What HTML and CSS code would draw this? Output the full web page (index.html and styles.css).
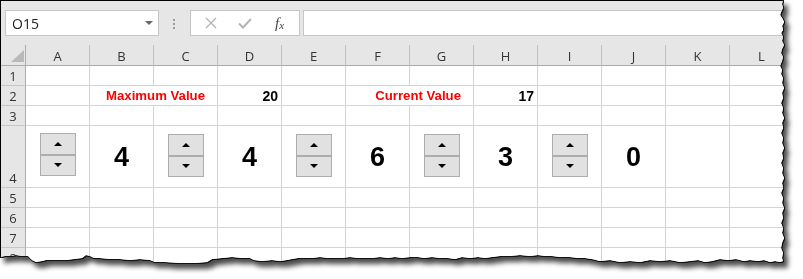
FILE: index.html
```html
<!DOCTYPE html>
<html>
<head>
<meta charset="utf-8">
<link rel="stylesheet" href="styles.css">
</head>
<body>
<div class="stage">
  <div class="sheet">
    <div class="fbar">
      <div class="namebox"><span>O15</span><span class="caret"></span></div>
      <div class="dots"><i></i><i></i><i></i></div>
      <div class="fxbox">
        <svg class="ico" width="14" height="14" viewBox="0 0 14 14"><path d="M2 2L12 12M12 2L2 12" stroke="#b4b4b4" stroke-width="1.4" fill="none"/></svg>
        <svg class="ico" width="16" height="14" viewBox="0 0 16 14"><path d="M2 7.5L6 11.5L14 3" stroke="#b4b4b4" stroke-width="2" fill="none"/></svg>
        <span class="fx">f<sub>x</sub></span>
      </div>
      <div class="finput"></div>
    </div>
    <div class="grid">
      <div class="corner"><span class="tri"></span></div>
      <div class="ch">A</div><div class="ch">B</div><div class="ch">C</div><div class="ch">D</div><div class="ch">E</div><div class="ch">F</div><div class="ch">G</div><div class="ch">H</div><div class="ch">I</div><div class="ch">J</div><div class="ch">K</div><div class="ch">L</div>

      <div class="rh">1</div>
      <div class="c"></div><div class="c"></div><div class="c"></div><div class="c"></div><div class="c"></div><div class="c"></div><div class="c"></div><div class="c"></div><div class="c"></div><div class="c"></div><div class="c"></div><div class="c"></div>

      <div class="rh">2</div>
      <div class="c"></div>
      <div class="c label span2">Maximum Value</div>
      <div class="c num">20</div>
      <div class="c"></div>
      <div class="c label span2">Current Value</div>
      <div class="c num">17</div>
      <div class="c"></div><div class="c"></div><div class="c"></div><div class="c"></div>

      <div class="rh bottom">3</div>
      <div class="c"></div><div class="c"></div><div class="c"></div><div class="c"></div><div class="c"></div><div class="c"></div><div class="c"></div><div class="c"></div><div class="c"></div><div class="c"></div><div class="c"></div><div class="c"></div>

      <div class="rh bottom">4</div>
      <div class="c spin-cell"><div class="spinner"><div class="sb"><span class="up"></span></div><div class="sb"><span class="down"></span></div></div></div>
      <div class="c big">4</div>
      <div class="c spin-cell low"><div class="spinner"><div class="sb"><span class="up"></span></div><div class="sb"><span class="down"></span></div></div></div>
      <div class="c big">4</div>
      <div class="c spin-cell low"><div class="spinner"><div class="sb"><span class="up"></span></div><div class="sb"><span class="down"></span></div></div></div>
      <div class="c big">6</div>
      <div class="c spin-cell low"><div class="spinner"><div class="sb"><span class="up"></span></div><div class="sb"><span class="down"></span></div></div></div>
      <div class="c big">3</div>
      <div class="c spin-cell low"><div class="spinner"><div class="sb"><span class="up"></span></div><div class="sb"><span class="down"></span></div></div></div>
      <div class="c big">0</div>
      <div class="c"></div><div class="c"></div>

      <div class="rh">5</div>
      <div class="c"></div><div class="c"></div><div class="c"></div><div class="c"></div><div class="c"></div><div class="c"></div><div class="c"></div><div class="c"></div><div class="c"></div><div class="c"></div><div class="c"></div><div class="c"></div>

      <div class="rh">6</div>
      <div class="c"></div><div class="c"></div><div class="c"></div><div class="c"></div><div class="c"></div><div class="c"></div><div class="c"></div><div class="c"></div><div class="c"></div><div class="c"></div><div class="c"></div><div class="c"></div>

      <div class="rh">7</div>
      <div class="c"></div><div class="c"></div><div class="c"></div><div class="c"></div><div class="c"></div><div class="c"></div><div class="c"></div><div class="c"></div><div class="c"></div><div class="c"></div><div class="c"></div><div class="c"></div>

      <div class="rh">8</div>
      <div class="c"></div><div class="c"></div><div class="c"></div><div class="c"></div><div class="c"></div><div class="c"></div><div class="c"></div><div class="c"></div><div class="c"></div><div class="c"></div><div class="c"></div><div class="c"></div>
    </div>
  </div>
</div>
</body>
</html>
```
FILE: styles.css
```css
html, body {
  margin: 0;
  padding: 0;
  background: #fff;
}
body {
  width: 803px;
  height: 279px;
  overflow: hidden;
  font-family: "Open Sans", "Noto Sans", sans-serif;
}
.stage {
  width: 800px;
  height: 275px;
  filter: drop-shadow(1px 0 0 #111) drop-shadow(0 1px 0 #111) drop-shadow(4px 5px 2.5px rgba(0,0,0,0.7));
}
.sheet {
  width: 790px;
  height: 268px;
  box-sizing: border-box;
  border-top: 1px solid #000;
  border-left: 1px solid #000;
  background: #fff;
  overflow: hidden;
  clip-path: polygon(0px 0px, 783px 0px, 782px 4px, 783px 8px, 781px 12px, 780px 15px, 782px 18px, 784px 22px, 782px 26px, 783px 30px, 781px 33px, 783px 37px, 782px 41px, 784px 45px, 782px 49px, 781px 53px, 783px 57px, 782px 61px, 780px 66px, 782px 70px, 781px 74px, 783px 78px, 782px 83px, 784px 88px, 782px 93px, 783px 98px, 781px 103px, 783px 108px, 782px 113px, 784px 118px, 782px 123px, 783px 128px, 781px 133px, 783px 138px, 782px 143px, 784px 148px, 782px 153px, 783px 158px, 781px 163px, 783px 168px, 782px 173px, 784px 178px, 782px 183px, 783px 188px, 781px 193px, 783px 198px, 782px 203px, 784px 208px, 782px 213px, 783px 218px, 781px 223px, 783px 228px, 782px 233px, 784px 238px, 782px 243px, 781px 248px, 783px 253px, 782px 258px, 783px 261px, 780px 262px, 775px 261px, 770px 262px, 764px 260px, 758px 261px, 750px 260px, 744px 261px, 736px 259px, 728px 260px, 720px 259px, 712px 261px, 705px 262px, 698px 260px, 690px 261px, 680px 262px, 670px 260px, 660px 261px, 650px 260px, 640px 262px, 630px 261px, 620px 262px, 610px 260px, 600px 261px, 592px 259px, 585px 258px, 578px 258px, 570px 257px, 560px 257px, 552px 256px, 545px 256px, 538px 255px, 530px 256px, 520px 255px, 510px 256px, 500px 256px, 492px 257px, 485px 258px, 478px 257px, 470px 258px, 462px 257px, 455px 259px, 448px 258px, 440px 258px, 432px 257px, 424px 258px, 418px 257px, 410px 257px, 402px 258px, 395px 257px, 388px 258px, 380px 257px, 372px 258px, 365px 258px, 358px 258px, 350px 257px, 342px 258px, 335px 258px, 328px 258px, 320px 257px, 312px 258px, 305px 258px, 298px 258px, 292px 259px, 287px 260px, 280px 261px, 272px 260px, 262px 261px, 254px 260px, 250px 258px, 242px 258px, 232px 257px, 222px 258px, 212px 259px, 207px 262px, 195px 263px, 180px 263px, 165px 262px, 155px 262px, 150px 260px, 140px 259px, 130px 260px, 120px 259px, 110px 259px, 100px 258px, 94px 258px, 90px 256px, 86px 255px, 82px 258px, 74px 259px, 66px 260px, 56px 260px, 46px 260px, 42px 261px, 36px 262px, 32px 260px, 28px 256px, 22px 256px, 16px 255px, 10px 256px, 5px 256px, 0px 257px);
}

/* formula bar */
.fbar {
  height: 44px;
  box-sizing: border-box;
  background: #e6e6e6;
  display: flex;
  align-items: flex-start;
  padding: 9px 0 0 4px;
}
.namebox {
  width: 154px;
  height: 26px;
  box-sizing: border-box;
  border: 1px solid #c6c6c6;
  background: #fff;
  display: flex;
  align-items: center;
  justify-content: space-between;
  padding: 0 5px 0 6px;
  font-size: 14px;
  color: #222;
}
.caret {
  width: 0;
  height: 0;
  border-left: 4px solid transparent;
  border-right: 4px solid transparent;
  border-top: 4px solid #666;
}
.dots {
  width: 2px;
  margin: 9px 15px 0 14px;
  display: flex;
  flex-direction: column;
  gap: 2px;
}
.dots i {
  display: block;
  width: 2px;
  height: 2px;
  background: #9a9a9a;
}
.fxbox {
  width: 110px;
  height: 26px;
  box-sizing: border-box;
  border: 1px solid #c6c6c6;
  background: #fff;
  display: flex;
  align-items: center;
  padding-left: 13px;
  gap: 19px;
}
.fxbox .ico { display: block; }
.fx {
  font-family: "Liberation Serif", serif;
  font-style: italic;
  font-size: 15px;
  color: #444;
  margin-left: 3px;
  line-height: 1;
}
.fx sub {
  font-size: 11px;
  vertical-align: -1px;
}
.finput {
  flex: 1;
  margin-left: 3px;
  height: 26px;
  box-sizing: border-box;
  border: 1px solid #c6c6c6;
  border-right: none;
  background: #fff;
}

/* grid */
.grid {
  display: grid;
  grid-template-columns: 25px repeat(12, 64px);
  grid-template-rows: 21px 20px 20px 20px 62px 20px 20px 20px 20px;
}
.grid > div {
  box-sizing: border-box;
}
.corner {
  background: #e6e6e6;
  border-right: 1px solid #ababab;
  border-bottom: 1px solid #ababab;
  display: flex;
  align-items: flex-end;
  justify-content: flex-end;
  padding: 0 1px 3px 0;
}
.tri {
  width: 0;
  height: 0;
  border-left: 13px solid transparent;
  border-bottom: 12px solid #b9b9b9;
}
.ch {
  background: #e6e6e6;
  border-right: 1px solid #c0c0c0;
  border-bottom: 1px solid #ababab;
  display: flex;
  align-items: center;
  justify-content: center;
  font-size: 13px;
  color: #333;
  padding-top: 1px;
}
.rh {
  background: #e6e6e6;
  border-right: 1px solid #ababab;
  border-bottom: 1px solid #c6c6c6;
  display: flex;
  align-items: center;
  justify-content: center;
  font-size: 13px;
  color: #333;
}
.rh.bottom {
  align-items: flex-end;
}
.c {
  border-right: 1px solid #d4d4d4;
  border-bottom: 1px solid #d4d4d4;
  background: #fff;
  font-family: "Liberation Sans", Arial, sans-serif;
  font-weight: bold;
  font-size: 14px;
  display: flex;
  align-items: center;
}
.span2 {
  grid-column: span 2;
}
.label {
  color: #ff0000;
  justify-content: flex-end;
  padding-right: 12px;
  font-size: 13.2px;
}
.num {
  color: #000;
  justify-content: flex-end;
  padding-right: 3px;
}
.big {
  justify-content: center;
  font-size: 27px;
  color: #000;
  padding-top: 2px;
}
.spin-cell {
  align-items: flex-start;
  padding: 7px 0 0 14px;
}
.spin-cell.low {
  padding-top: 8px;
}
.spinner {
  width: 36px;
  height: 43px;
  box-sizing: border-box;
  border: 1px solid #adadad;
  background: #e1e1e1;
  display: flex;
  flex-direction: column;
}
.sb {
  flex: 1;
  display: flex;
  align-items: center;
  justify-content: center;
}
.sb + .sb {
  border-top: 2px solid #adadad;
}
.up {
  width: 0;
  height: 0;
  border-left: 4px solid transparent;
  border-right: 4px solid transparent;
  border-bottom: 4px solid #000;
}
.down {
  width: 0;
  height: 0;
  border-left: 4px solid transparent;
  border-right: 4px solid transparent;
  border-top: 4px solid #000;
}
```
